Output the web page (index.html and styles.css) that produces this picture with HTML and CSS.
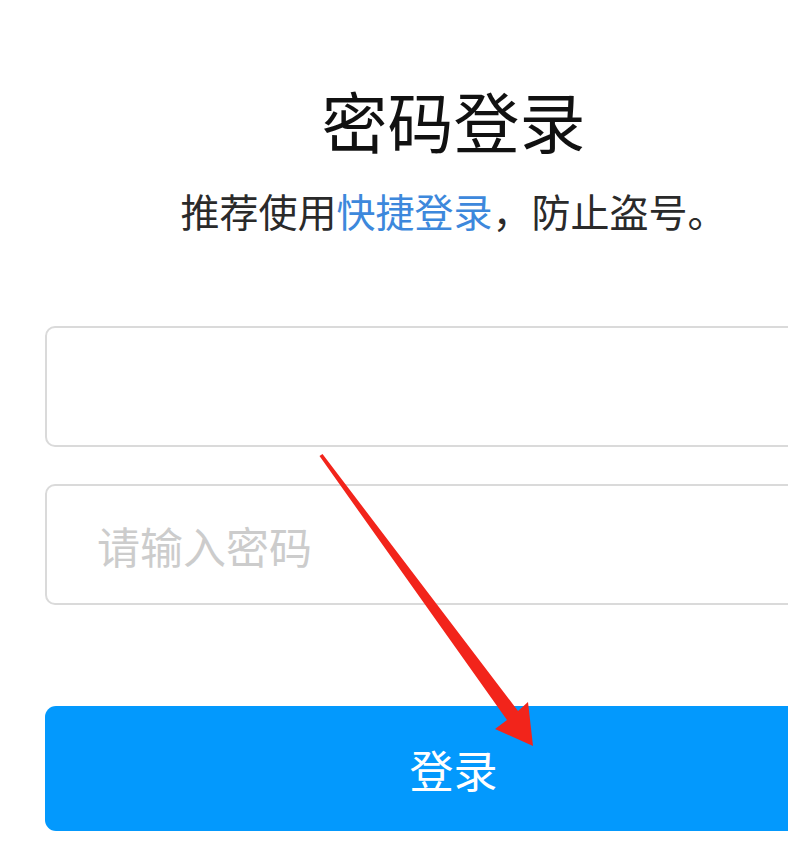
FILE: index.html
```html
<!DOCTYPE html>
<html lang="zh-CN">
<head>
<meta charset="utf-8">
<title>密码登录</title>
<link rel="stylesheet" href="styles.css">
</head>
<body>
<div class="page">
  <main class="login">
    <h1 class="title">密码登录</h1>
    <p class="subtitle">推荐使用<a class="link" href="#">快捷登录</a>，防止盗号。</p>
    <form class="form">
      <input class="field" type="text" aria-label="账号">
      <input class="field" type="password" placeholder="请输入密码">
      <button class="submit" type="button">登录</button>
    </form>
  </main>
  <svg class="arrow" width="788" height="852" viewBox="0 0 788 852" aria-hidden="true">
    <polygon points="319.5,456 322.5,454 518,711 528,702 533,746 495,729 507,720" fill="#f2241b"/>
  </svg>
</div>
</body>
</html>
```
FILE: styles.css
```css
html, body {
  margin: 0;
  padding: 0;
  background: #ffffff;
}
body {
  width: 788px;
  height: 852px;
  overflow: hidden;
  font-family: "Noto Sans CJK SC", "Noto Sans", sans-serif;
}
.page {
  position: relative;
  width: 788px;
  height: 852px;
  overflow: hidden;
}
.login {
  margin-left: 45px;
  width: 817px;
  padding-top: 86px;
  display: flex;
  flex-direction: column;
  align-items: stretch;
}
.title {
  margin: 0;
  font-size: 66px;
  line-height: 66px;
  font-weight: 400;
  color: #111111;
  text-align: center;
}
.subtitle {
  margin: 39px 0 0;
  font-size: 39px;
  line-height: 39px;
  color: #2a2a2a;
  text-align: center;
}
.link {
  color: #3d88dc;
  text-decoration: none;
}
.form {
  margin-top: 96px;
  display: flex;
  flex-direction: column;
  gap: 37px;
}
.field {
  box-sizing: border-box;
  display: block;
  width: 100%;
  height: 121px;
  margin: 0;
  padding: 0 0 0 50px;
  border: 2px solid #dadada;
  border-radius: 10px;
  background: #ffffff;
  font-family: "Noto Sans CJK SC", "Noto Sans", sans-serif;
  font-size: 43px;
  color: #333333;
  outline: none;
}
.field::placeholder {
  color: #cccccc;
}
.submit {
  box-sizing: border-box;
  display: block;
  width: 100%;
  height: 125px;
  margin-top: 64px;
  padding: 0;
  border: none;
  border-radius: 11px;
  background: #0399fd;
  color: #ffffff;
  font-family: "Noto Sans CJK SC", "Noto Sans", sans-serif;
  font-size: 44px;
  line-height: 44px;
}
.arrow {
  position: absolute;
  top: 0;
  left: 0;
  pointer-events: none;
}
```
